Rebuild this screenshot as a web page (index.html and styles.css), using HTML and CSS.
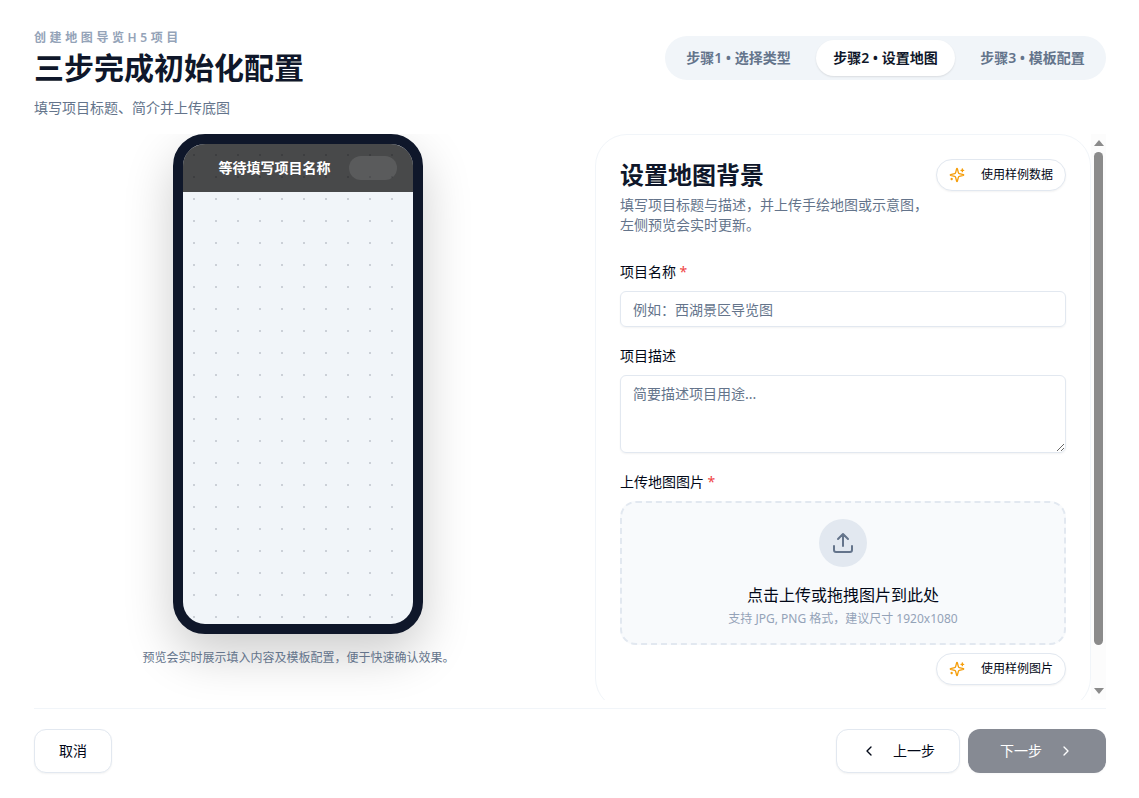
FILE: index.html
```html
<!DOCTYPE html>
<html lang="zh-CN">
<head>
<meta charset="utf-8">
<meta name="viewport" content="width=device-width, initial-scale=1">
<title>创建地图导览H5项目</title>
<link rel="stylesheet" href="styles.css">
</head>
<body>
<svg class="sprite" aria-hidden="true">
  <symbol id="sparkles" viewBox="0 0 24 24">
    <path d="M9.937 15.5A2 2 0 0 0 8.5 14.063l-6.135-1.582a.5.5 0 0 1 0-.962L8.5 9.936A2 2 0 0 0 9.937 8.5l1.582-6.135a.5.5 0 0 1 .963 0L14.063 8.5A2 2 0 0 0 15.5 9.937l6.135 1.581a.5.5 0 0 1 0 .964L15.5 14.063a2 2 0 0 0-1.437 1.437l-1.582 6.135a.5.5 0 0 1-.963 0z"/>
    <path d="M20 3v4M22 5h-4M4 17v2M5 18H3"/>
  </symbol>
</svg>
<div class="app">
  <header class="head">
    <div class="intro">
      <p class="eyebrow">创建地图导览H5项目</p>
      <h1 class="title">三步完成初始化配置</h1>
      <p class="subtitle">填写项目标题、简介并上传底图</p>
    </div>
    <ol class="steps">
      <li class="step">步骤1 • 选择类型</li>
      <li class="step step-active" aria-current="step">步骤2 • 设置地图</li>
      <li class="step">步骤3 • 模板配置</li>
    </ol>
  </header>

  <main class="main">
    <section class="preview">
      <div class="phone">
        <div class="phone-bar">
          <span class="phone-title">等待填写项目名称</span>
          <span class="phone-capsule"></span>
        </div>
      </div>
      <p class="caption">预览会实时展示填入内容及模板配置，便于快速确认效果。</p>
    </section>

    <section class="pane">
      <div class="scroller">
        <form class="card">
          <div class="card-head">
            <div class="card-intro">
              <h2 class="card-title">设置地图背景</h2>
              <p class="card-desc">填写项目标题与描述，并上传手绘地图或示意图，左侧预览会实时更新。</p>
            </div>
            <button type="button" class="sample"><svg class="icon"><use href="#sparkles"/></svg>使用样例数据</button>
          </div>
          <div class="field">
            <label class="label" for="name">项目名称 <span class="required">*</span></label>
            <input class="control" id="name" type="text" placeholder="例如：西湖景区导览图">
          </div>
          <div class="field">
            <label class="label" for="desc">项目描述</label>
            <textarea class="control control-area" id="desc" placeholder="简要描述项目用途..."></textarea>
          </div>
          <div class="field">
            <span class="label" id="upload-label">上传地图图片 <span class="required">*</span></span>
            <button type="button" class="drop" aria-describedby="upload-label">
              <span class="drop-icon">
                <svg class="icon-large" viewBox="0 0 24 24"><path d="M12 3v12M17 8l-5-5-5 5M21 15v4a2 2 0 0 1-2 2H5a2 2 0 0 1-2-2v-4"/></svg>
              </span>
              <span class="drop-title">点击上传或拖拽图片到此处</span>
              <span class="drop-hint">支持 JPG, PNG 格式，建议尺寸 1920x1080</span>
            </button>
            <button type="button" class="sample sample-end"><svg class="icon"><use href="#sparkles"/></svg>使用样例图片</button>
          </div>
        </form>
      </div>
      <div class="bar" aria-hidden="true">
        <span class="arrow arrow-up"></span>
        <span class="track"><span class="thumb"></span></span>
        <span class="arrow arrow-down"></span>
      </div>
    </section>
  </main>

  <footer class="foot">
    <button type="button" class="btn">取消</button>
    <div class="foot-group">
      <button type="button" class="btn"><svg class="icon" viewBox="0 0 24 24"><path d="m15 18-6-6 6-6"/></svg>上一步</button>
      <button type="button" class="btn btn-primary" disabled>下一步<svg class="icon" viewBox="0 0 24 24"><path d="m9 18 6-6-6-6"/></svg></button>
    </div>
  </footer>
</div>
</body>
</html>
```

FILE: styles.css
```css
* {
  box-sizing: border-box;
}

body {
  margin: 0;
  background: #fff;
  color: #020817;
  font-family: "Noto Sans", "Noto Sans CJK SC", sans-serif;
  font-size: 14px;
  line-height: 20px;
}

h1, h2, p, ol {
  margin: 0;
  padding: 0;
}

button, input, textarea {
  font: inherit;
  color: inherit;
}

.sprite {
  position: absolute;
  width: 0;
  height: 0;
}

.icon, .icon-large {
  flex: none;
  width: 16px;
  height: 16px;
  fill: none;
  stroke: currentColor;
  stroke-width: 2;
  stroke-linecap: round;
  stroke-linejoin: round;
}

.icon-large {
  width: 24px;
  height: 24px;
}

.app {
  display: flex;
  flex-direction: column;
  height: 100vh;
  padding: 30px 33px 25px 34px;
}

/* Header */
.head {
  display: flex;
  justify-content: space-between;
  align-items: flex-start;
  padding-bottom: 16px;
}

.eyebrow {
  color: #94a3b8;
  font-size: 12px;
  font-weight: 600;
  line-height: 16px;
  letter-spacing: 0.3em;
}

.title {
  margin: 4px 0 12px;
  color: #0f172a;
  font-size: 30px;
  font-weight: 700;
  line-height: 36px;
}

.subtitle {
  color: #64748b;
}

.steps {
  display: flex;
  gap: 8px;
  margin-top: 6px;
  padding: 4px;
  border-radius: 22px;
  background: #f1f5f9;
  list-style: none;
}

.step {
  min-width: 139px;
  padding: 8px 12px;
  border-radius: 18px;
  color: #64748b;
  font-weight: 600;
  text-align: center;
}

.step-active {
  background: #fff;
  color: #0f172a;
  box-shadow: 0 1px 2px rgba(0, 0, 0, 0.1);
}

/* Two columns */
.main {
  display: grid;
  flex: 1;
  grid-template-columns: minmax(0, 1.035fr) minmax(0, 1fr);
  grid-template-rows: minmax(0, 1fr);
  gap: 32px;
  min-height: 0;
}

.preview {
  display: flex;
  flex-direction: column;
  align-items: center;
  gap: 14px;
  overflow: hidden;
}

.phone {
  flex: none;
  width: 250px;
  height: 500px;
  border: 10px solid #0f172a;
  border-radius: 32px;
  overflow: hidden;
  background: #f1f5f9 radial-gradient(circle, #cbd0d7 1px, transparent 1px) 0 0 / 22px 22px;
  background-origin: padding-box;
  box-shadow: 0 20px 50px rgba(0, 0, 0, 0.2);
}

.phone-bar {
  display: flex;
  align-items: center;
  height: 48px;
  padding: 0 16px;
  background: rgba(0, 0, 0, 0.7);
}

.phone-title {
  flex: 1;
  color: #fff;
  font-weight: 700;
  text-align: center;
}

.phone-capsule {
  width: 48px;
  height: 24px;
  border-radius: 12px;
  background: rgba(255, 255, 255, 0.1);
}

.caption {
  position: relative;
  color: #64748b;
  font-size: 12px;
}

/* Form pane */
.pane {
  display: flex;
  min-height: 0;
}

.scroller {
  flex: 1;
  overflow-y: auto;
  scrollbar-width: none;
}

.card {
  display: flex;
  flex-direction: column;
  gap: 18px;
  padding: 24px;
  border: 1px solid #f1f5f9;
  border-radius: 32px;
  background: #fff;
}

.card-head {
  display: flex;
  justify-content: space-between;
  align-items: flex-start;
  margin-bottom: 8px;
}

.card-title {
  margin-bottom: 4px;
  color: #0f172a;
  font-size: 24px;
  font-weight: 700;
  line-height: 32px;
}

.card-desc {
  color: #64748b;
}

.sample {
  display: flex;
  flex: none;
  align-items: center;
  gap: 16px;
  height: 32px;
  padding: 0 12px;
  border: 1px solid #e2e8f0;
  border-radius: 16px;
  background: #fff;
  box-shadow: 0 1px 2px rgba(0, 0, 0, 0.05);
  font-size: 12px;
}

.sample .icon {
  color: #f59e0b;
}

.sample-end {
  align-self: flex-end;
}

.field {
  display: flex;
  flex-direction: column;
  gap: 8px;
}

.label {
  height: 22px;
  line-height: 22px;
}

.required {
  color: #ef4444;
}

.control {
  display: block;
  width: 100%;
  height: 36px;
  padding: 4px 12px;
  border: 1px solid #e2e8f0;
  border-radius: 6px;
  background: transparent;
  box-shadow: 0 1px 2px rgba(0, 0, 0, 0.05);
}

.control::placeholder {
  color: #64748b;
  opacity: 1;
}

.control-area {
  height: 78px;
  padding: 8px 12px;
  resize: vertical;
}

.drop {
  display: flex;
  flex-direction: column;
  align-items: center;
  width: 100%;
  padding: 16px;
  border: 2px dashed #e2e8f0;
  border-radius: 16px;
  background: #f8fafc;
}

.drop-icon {
  display: flex;
  align-items: center;
  justify-content: center;
  width: 48px;
  height: 48px;
  margin-bottom: 16px;
  border-radius: 50%;
  background: #e2e8f0;
  color: #64748b;
}

.drop-title {
  font-size: 16px;
  line-height: 24px;
}

.drop-hint {
  margin-top: 4px;
  color: #94a3b8;
  font-size: 12px;
  line-height: 16px;
}

/* Scroll bar beside the card */
.bar {
  display: flex;
  flex-direction: column;
  align-items: center;
  gap: 6px;
  width: 15px;
  padding: 6px 0;
  background: #fcfcfc;
}

.arrow {
  border: 5px solid transparent;
}

.arrow-up {
  border-top-width: 0;
  border-bottom: 6px solid #8b8b8b;
}

.arrow-down {
  border-bottom-width: 0;
  border-top: 6px solid #8b8b8b;
}

.track {
  flex: 1;
}

.thumb {
  display: block;
  width: 9px;
  height: 93%;
  border-radius: 5px;
  background: #8b8b8b;
}

/* Footer */
.foot {
  display: flex;
  justify-content: space-between;
  margin-top: 8px;
  padding-top: 20px;
  border-top: 1px solid #f1f5f9;
}

.foot-group {
  display: flex;
  gap: 8px;
}

.btn {
  display: flex;
  align-items: center;
  gap: 16px;
  height: 44px;
  padding: 0 24px;
  border: 1px solid #e2e8f0;
  border-radius: 12px;
  background: #fff;
  box-shadow: 0 1px 2px rgba(0, 0, 0, 0.05);
}

.btn-primary {
  padding: 0 32px;
  border: 0;
  background: #0f172a;
  color: #fff;
  opacity: 0.5;
}
```
